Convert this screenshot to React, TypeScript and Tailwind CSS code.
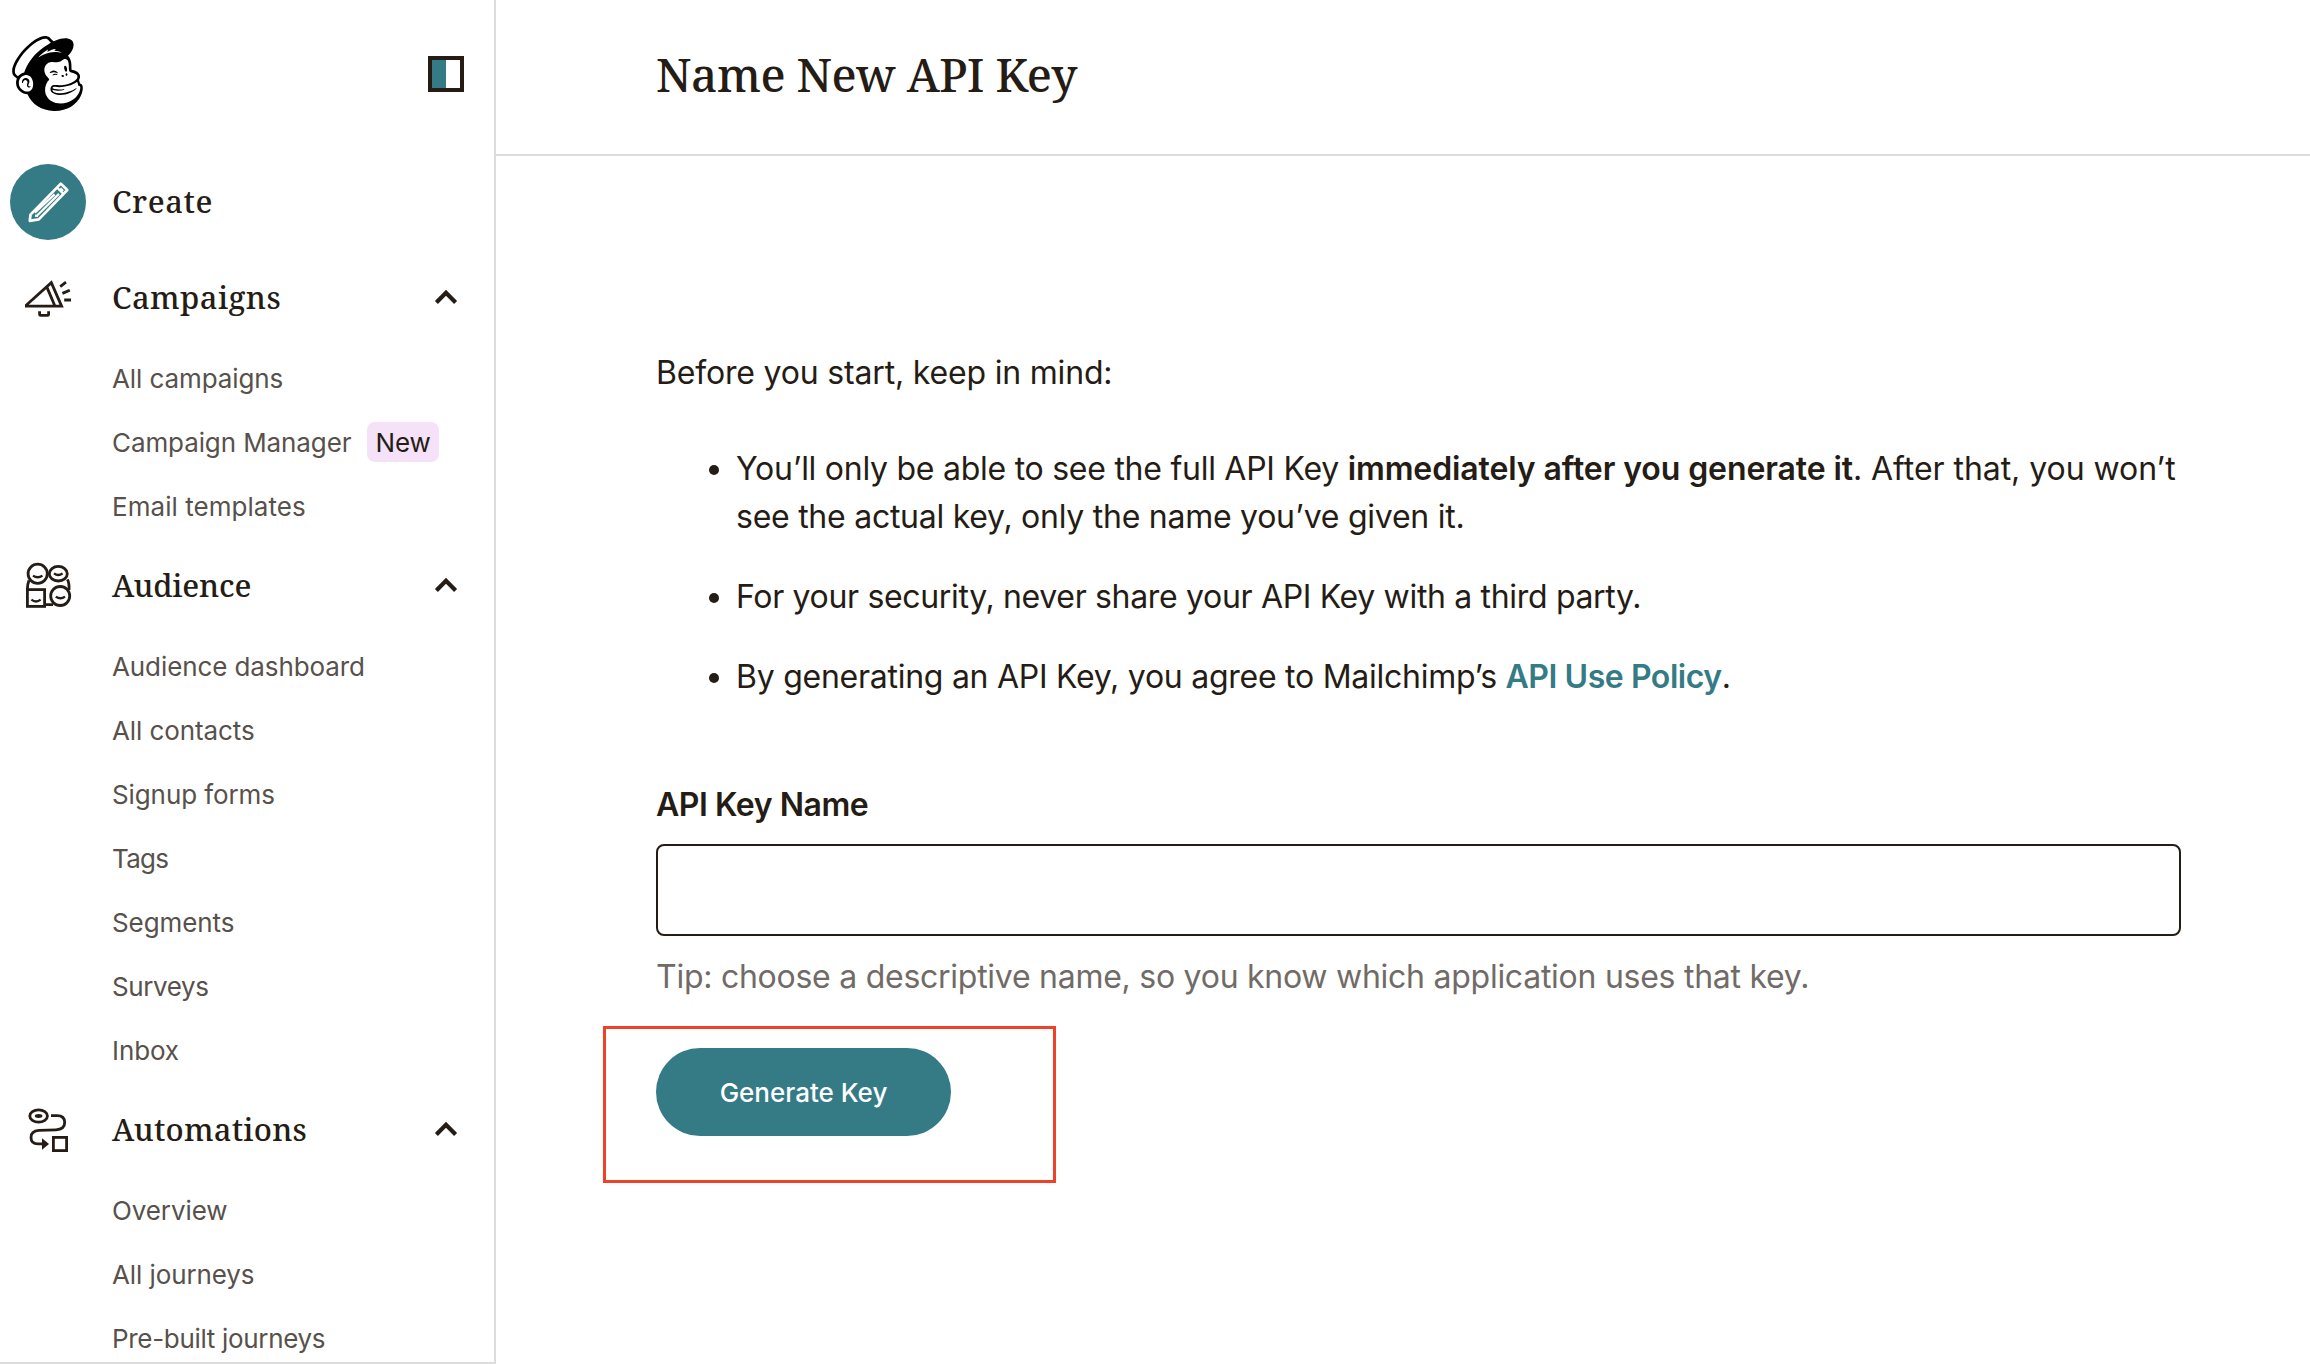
import React from "react";
import { SiMailchimp } from "react-icons/si";

const SERIF = "font-['Noto_Serif','DejaVu_Serif',serif]";

function PencilIcon() {
  return (
    <svg viewBox="0 0 76 76" className="size-[76px] shrink-0 rounded-full bg-[#357b86]" fill="none" stroke="#fff" strokeWidth="2.7" strokeLinejoin="round">
      <path d="M19.8 56.8 20.5 50.6 50.8 19.6 57.3 26 28.8 55.4Z" />
      <path d="M47 23.5 53.4 29.9M50.4 24.2 53.2 27M27.4 51.2 49 29.9M24.8 48.6 44.6 30.4M25 51.6 28 52" strokeWidth="2.2" />
    </svg>
  );
}

function MegaphoneIcon() {
  return (
    <svg viewBox="0 0 76 76" className="size-[76px] shrink-0" fill="none" stroke="#241c15" strokeWidth="2.8">
      <path d="M16.4 45.2V44L41.3 21.6 51.6 45.2ZM37 26.4 44.8 44.8" />
      <path d="M29.6 50.2V53.4Q29.6 54.4 30.6 54.4H37.6Q38.6 54.4 38.6 53.4V50.2" />
      <path d="M50.2 25.6 56 21.2M52.4 32.4 59.8 29.2M54.2 39H61" />
    </svg>
  );
}

function PeopleIcon() {
  return (
    <svg viewBox="0 0 76 76" className="size-[76px] shrink-0" fill="none" stroke="#241c15" strokeWidth="2.8">
      <circle cx="27.7" cy="24.7" r="9.6" />
      <ellipse cx="48.3" cy="24.7" rx="9" ry="7.3" />
      <rect x="17.4" y="40.6" width="17.2" height="16.8" />
      <circle cx="50.2" cy="47" r="9.5" />
      <path d="M19 31.4Q17.4 35 17.4 40.6M57.4 30.4Q59.4 34 59 41M35 55.6H43" />
      <path d="M23 26.6Q27.7 30 32.4 26.6M44 24.4Q48.3 27.6 52.6 24.4M21.4 50.6Q26 54.2 30.6 50.6M45.8 47.6Q50.4 51 55 47.6" strokeWidth="2.4" />
    </svg>
  );
}

function JourneyIcon() {
  return (
    <svg viewBox="0 0 76 76" className="size-[76px] shrink-0" fill="none" stroke="#241c15" strokeWidth="2.8">
      <ellipse cx="28.6" cy="23" rx="8.8" ry="6.2" />
      <ellipse cx="28.6" cy="23" rx="3.8" ry="1.9" fill="#241c15" stroke="none" />
      <path d="M41 22.7H47.2Q54.7 22.7 54.7 29.6 54.7 36.4 46 36.8L29 37.4Q21 38 21 44.4 21 50.8 28 50.8H33" />
      <path d="M32 45.2 39 51 32 56.8Z" fill="#241c15" stroke="none" />
      <rect x="43.4" y="44.4" width="13.2" height="13.2" />
    </svg>
  );
}

function Chevron() {
  return (
    <svg viewBox="0 0 24 16" className="mr-[36px] mb-[5px] ml-auto h-4 w-6" fill="none" stroke="#241c15" strokeWidth="4.2">
      <path d="M2.4 13.4 12 3.8 21.6 13.4" />
    </svg>
  );
}

type Item = { label: string; badge?: string; tracking?: string };

function Section({ title, tracking, icon, items }: { title: string; tracking: string; icon: React.ReactNode; items: Item[] }) {
  return (
    <section>
      <button className="flex h-24 w-full items-center">
        {icon}
        <span className={`${SERIF} ${tracking} mb-[3px] ml-[26px] text-[31px] leading-none font-medium`}>{title}</span>
        <Chevron />
      </button>
      <ul className="ml-[102px] text-[26px] text-[#57514c]">
        {items.map((item) => (
          <li key={item.label} className={`flex h-16 items-center pb-[2px] ${item.tracking ?? "tracking-[-0.1px]"}`}>
            {item.label}
            {item.badge && (
              <span className="ml-4 flex h-10 items-center rounded-lg bg-[#f5e2f8] px-2 text-[#241c15]">{item.badge}</span>
            )}
          </li>
        ))}
      </ul>
    </section>
  );
}

function Bullet({ children }: { children: React.ReactNode }) {
  return (
    <li className="flex">
      <span className="mt-[20px] mr-[17px] size-[10px] shrink-0 rounded-full bg-[#241c15]" />
      <p className="whitespace-nowrap">{children}</p>
    </li>
  );
}

export default function App() {
  return (
    <div className="flex h-[1364px] w-[2310px] overflow-hidden bg-white font-['Inter',sans-serif] text-[#241c15]">
      <aside className="flex w-[496px] shrink-0 flex-col border-r-2 border-b-2 border-[#dcdcdc] pl-[10px]">
        <div className="flex h-[155px] shrink-0 items-start">
          <SiMailchimp className="mt-[36px] size-[75px] text-black" />
          <div className="mt-14 mr-[30px] ml-auto size-9 border-4 border-[#241c15]">
            <div className="h-full w-[14px] bg-[#357b86]" />
          </div>
        </div>
        <button className="flex h-24 shrink-0 items-center pb-[2px]">
          <PencilIcon />
          <span className={`${SERIF} mb-[2px] ml-[26px] text-[31px] leading-none font-medium tracking-[0.6px]`}>Create</span>
        </button>
        <nav>
          <Section
            title="Campaigns"
            tracking="tracking-[0.4px]"
            icon={<MegaphoneIcon />}
            items={[{ label: "All campaigns" }, { label: "Campaign Manager", badge: "New" }, { label: "Email templates", tracking: "tracking-[0.05px]" }]}
          />
          <Section
            title="Audience"
            tracking="tracking-[-0.2px]"
            icon={<PeopleIcon />}
            items={[
              { label: "Audience dashboard" },
              { label: "All contacts" },
              { label: "Signup forms" },
              { label: "Tags", tracking: "tracking-[-0.7px]" },
              { label: "Segments" },
              { label: "Surveys", tracking: "tracking-[-0.4px]" },
              { label: "Inbox" },
            ]}
          />
          <Section
            title="Automations"
            tracking="tracking-[0.2px]"
            icon={<JourneyIcon />}
            items={[{ label: "Overview" }, { label: "All journeys" }, { label: "Pre-built journeys", tracking: "tracking-[-0.32px]" }]}
          />
        </nav>
      </aside>

      <main className="flex-1">
        <header className="flex h-[156px] items-center border-b-2 border-[#dcdcdc] pb-[6px] pl-40">
          <h1 className={`${SERIF} text-[46px] leading-none font-medium tracking-[-0.45px]`}>Name New API Key</h1>
        </header>
        <div className="ml-40 w-[1525px] pt-[193px] text-[32px] leading-[48px] tracking-[-0.26px]">
          <p className="tracking-[-0.18px]">Before you start, keep in mind:</p>
          <ul className="mt-12 ml-[53px] flex flex-col gap-8">
            <Bullet>
              You’ll only be able to see the full API Key{" "}
              <strong className="font-semibold tracking-[-0.1px]">immediately after you generate it</strong>
              <span className="tracking-[-0.05px]">. After that, you won’t</span>
              <br />
              see the actual key, only the name you’ve given it.
            </Bullet>
            <Bullet>
              <span className="tracking-[-0.33px]">For your security, never share your API Key with a third party.</span>
            </Bullet>
            <Bullet>
              By generating an API Key, you agree to Mailchimp’s{" "}
              <a className="font-semibold tracking-[-0.45px] text-[#357b86]">API Use Policy</a>.
            </Bullet>
          </ul>
          <label htmlFor="key-name" className="mt-20 block font-semibold tracking-[-0.45px]">API Key Name</label>
          <input id="key-name" className="mt-[15px] block h-[92px] w-full rounded-lg border-2 border-[#241c15] px-6 outline-none" />
          <p className="mt-[17px] text-[#716b67]">Tip: choose a descriptive name, so you know which application uses that key.</p>
          <div className="mt-[25px] -ml-[53px] h-[157px] w-[453px] border-3 border-[#ee4128] pt-[19px] pl-[50px]">
            <button className="flex h-[88px] w-[295px] items-center justify-center rounded-full bg-[#357b86] pt-[2px] text-[26px] font-medium tracking-normal text-white">
              Generate Key
            </button>
          </div>
        </div>
      </main>
    </div>
  );
}
